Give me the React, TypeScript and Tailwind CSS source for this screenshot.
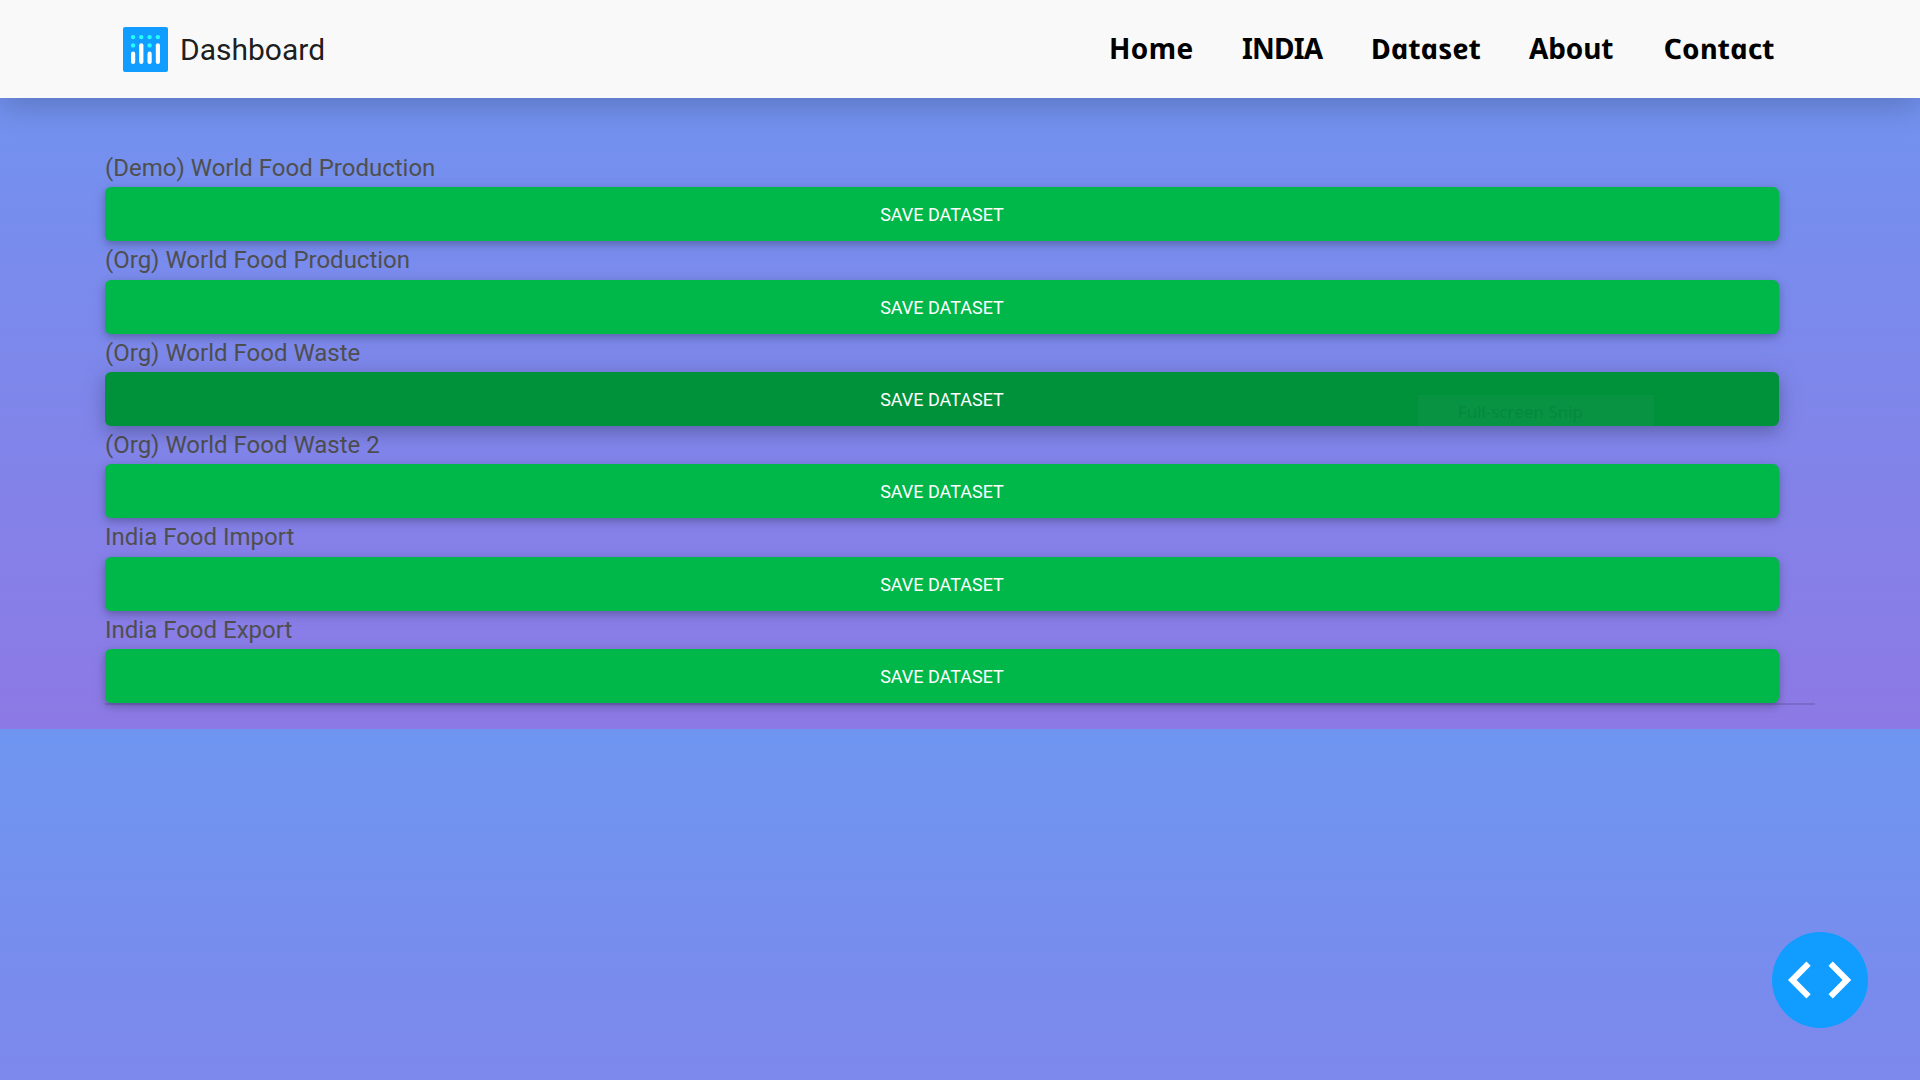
import React from "react";

type Dataset = { name: string; active?: boolean };

const datasets: Dataset[] = [
  { name: "(Demo) World Food Production" },
  { name: "(Org) World Food Production" },
  { name: "(Org) World Food Waste", active: true },
  { name: "(Org) World Food Waste 2" },
  { name: "India Food Import" },
  { name: "India Food Export" },
];

// Words containing an "a" use the italic cut, straightened, for its single-storey letterform.
const links = [
  { label: "Home", slot: "w-[133px]", text: "tracking-[0.4px]" },
  { label: "INDIA", slot: "w-[128px]", text: "tracking-[-0.8px]" },
  { label: "Dataset", slot: "w-[159px]", text: "inline-block origin-left scale-x-[1.06] skew-x-[12deg] italic" },
  { label: "About", slot: "w-[134px]", text: "tracking-[-0.1px]" },
  { label: "Contact", slot: "w-[115px]", text: "inline-block origin-left scale-x-[1.07] skew-x-[12deg] italic" },
];

function Logo() {
  return (
    <svg className="size-[45px]" viewBox="0 0 45 45">
      <rect width="45" height="45" rx="2" fill="#119dff" />
      <g fill="#25fefd">
        <circle cx="10.1" cy="10.1" r="2.2" />
        <circle cx="18.3" cy="10.1" r="2.2" />
        <circle cx="26.6" cy="10.1" r="2.2" />
        <circle cx="34.9" cy="10.1" r="2.2" />
        <circle cx="10.1" cy="18.4" r="2.2" />
        <circle cx="26.6" cy="18.4" r="2.2" />
      </g>
      <g fill="#fff">
        <rect x="8" y="24.6" width="4.2" height="12.4" rx="2.1" />
        <rect x="16.2" y="16.2" width="4.2" height="20.8" rx="2.1" />
        <rect x="24.5" y="24.6" width="4.2" height="12.4" rx="2.1" />
        <rect x="32.8" y="16.2" width="4.2" height="20.8" rx="2.1" />
      </g>
    </svg>
  );
}

function SaveButton({ active }: { active?: boolean }) {
  return (
    <button
      className={
        active
          ? "relative block h-[54px] w-full rounded-[6px] bg-[#00913b] pt-[1.2px] text-[18px] text-white shadow-[0_6px_15px_rgba(0,0,0,0.2),0_3px_30px_rgba(0,0,0,0.1)]"
          : "relative block h-[54px] w-full rounded-[6px] bg-[#00b74a] pt-[1.2px] text-[18px] text-white shadow-[0_3px_7.5px_rgba(0,0,0,0.2),0_3px_15px_rgba(0,0,0,0.1)]"
      }
    >
      SAVE DATASET
      {active && (
        <span className="absolute bottom-0 left-[1313px] flex h-[31px] w-[236px] items-center bg-[#079342] pt-[3px] pl-[40px] font-['Open_Sans',sans-serif] text-[17px] text-[#05883d]">
          Full-screen Snip
        </span>
      )}
    </button>
  );
}

export default function App() {
  return (
    <div className="flex h-[1080px] w-[1920px] flex-col overflow-hidden bg-[linear-gradient(to_bottom,#6e96f1,#8d79e5)] bg-[length:100%_729px] bg-repeat-y font-['Roboto',sans-serif]">
      <header className="flex h-[98px] shrink-0 items-center justify-between bg-[#f9f9f9] pr-[142px] pl-[123px] shadow-[0_8px_30px_rgba(0,0,0,0.2)]">
        <a className="flex items-center gap-3 text-[30px] text-black/90">
          <Logo />
          <span>Dashboard</span>
        </a>
        <nav className="flex pb-[2px] font-['Noto_Sans',sans-serif] text-[28px] leading-[40px] font-bold text-black">
          {links.map((l) => (
            <a key={l.label} className={l.slot}>
              <span className={l.text}>{l.label}</span>
            </a>
          ))}
        </nav>
      </header>

      <main className="mt-[50.8px] ml-[105px] h-[556.2px] w-[1710px] shrink-0 self-start border-b-2 border-black/12">
        <div className="w-[1674px]">
          {datasets.map((d) => (
            <section key={d.name} className="h-[92.4px]">
              <div className="h-[38.4px] text-[24px] leading-[38.4px] text-[#4f4f4f]">{d.name}</div>
              <SaveButton active={d.active} />
            </section>
          ))}
        </div>
      </main>

      <button className="fixed right-[52px] bottom-[52px] flex size-24 items-center justify-center rounded-full bg-[#119dff]">
        <svg className="size-24" viewBox="0 0 96 96" fill="#fff">
          <path d="M16 48 34.4 29.6 38.7 33.8 24.6 48 38.7 62.2 34.4 66.4Z" />
          <path d="M79.2 48 60.8 29.6 56.5 33.8 70.6 48 56.5 62.2 60.8 66.4Z" />
        </svg>
      </button>
    </div>
  );
}
